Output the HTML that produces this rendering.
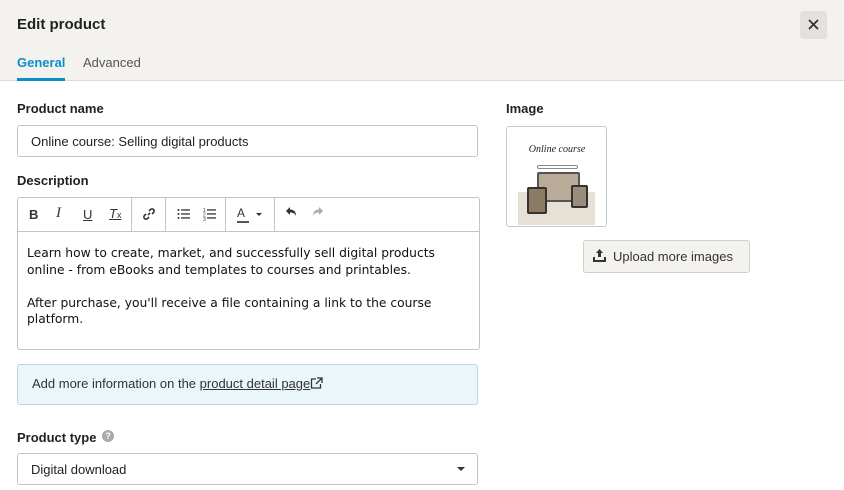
<!DOCTYPE html><html><head><style>
*{box-sizing:border-box;margin:0;padding:0}
body{width:844px;height:490px;overflow:hidden;background:#fff;font-family:"Liberation Sans",Arial,sans-serif;color:#222;position:relative}
.hdr{position:absolute;left:0;top:0;width:844px;height:81px;background:#f4f2ee;border-bottom:1px solid #dcdcdc}
.abs{position:absolute}
.lbl{position:absolute;font-size:13px;font-weight:bold;color:#222}
.inp{position:absolute;border:1px solid #c4c4c4;border-radius:3px;background:#fff;font-size:13px;padding-left:13px;display:flex;align-items:center;color:#222}
.tb{position:absolute;top:0;height:33px;border-right:1px solid #c4c4c4}
.ic{position:absolute;font-size:13px;color:#333}
.desc{font-family:"DejaVu Sans",Verdana,sans-serif;font-size:12.3px;line-height:16.5px;color:#111}
</style></head><body>
<div class="hdr"></div>
<div class="abs" style="left:17px;top:16px;font-size:15px;font-weight:bold;color:#222">Edit product</div>
<div class="abs" style="left:800px;top:11px;width:27px;height:28px;background:#e4e1dc;border-radius:3px"></div>
<svg class="abs" style="left:808px;top:19px" width="11" height="11" viewBox="0 0 11 11" stroke="#333" stroke-width="1.8"><path d="M1 1 10 10M10 1 1 10"/></svg>
<div class="abs" style="left:17px;top:55px;font-size:13px;font-weight:bold;color:#0a8fc7">General</div>
<div class="abs" style="left:17px;top:78px;width:48px;height:3px;background:#0a8fc7"></div>
<div class="abs" style="left:83px;top:55px;font-size:13px;color:#555">Advanced</div>

<div class="lbl" style="left:17px;top:101px">Product name</div>
<div class="inp" style="left:17px;top:125px;width:461px;height:32px">Online course: Selling digital products</div>
<div class="lbl" style="left:17px;top:173px">Description</div>
<div class="abs" style="left:17px;top:197px;width:463px;height:153px;border:1px solid #c4c4c4;border-radius:3px">
 <div class="abs" style="left:0;top:0;width:461px;height:34px;border-bottom:1px solid #c4c4c4"></div>
 <div class="tb" style="left:0;width:114px"></div>
 <div class="tb" style="left:114px;width:34px"></div>
 <div class="tb" style="left:148px;width:60px"></div>
 <div class="tb" style="left:208px;width:49px"></div>
 <div class="ic" style="left:11px;top:9px;font-weight:bold">B</div>
 <div class="ic" style="left:38px;top:7px;font-style:italic;font-family:'Liberation Serif',serif;font-size:15px">I</div>
 <div class="ic" style="left:65px;top:9px;text-decoration:underline">U</div>
 <div class="ic" style="left:91px;top:8px;font-style:italic;text-decoration:underline">T<span style="font-size:9px;font-style:normal">x</span></div>
 <svg class="abs" style="left:124px;top:9px" width="14" height="14" viewBox="0 0 14 14" fill="none" stroke="#333" stroke-width="1.6"><path d="M6 8 8 6M4 7 2.5 8.5a2 2 0 0 0 3 3L7 10M10 7l1.5-1.5a2 2 0 0 0-3-3L7 4"/></svg>
 <svg class="abs" style="left:159px;top:10px" width="14" height="12" viewBox="0 0 14 12" fill="#333"><circle cx="1.5" cy="2" r="1"/><circle cx="1.5" cy="6" r="1"/><circle cx="1.5" cy="10" r="1"/><rect x="4" y="1.3" width="9" height="1.3"/><rect x="4" y="5.3" width="9" height="1.3"/><rect x="4" y="9.3" width="9" height="1.3"/></svg>
 <svg class="abs" style="left:185px;top:9px" width="14" height="14" viewBox="0 0 14 14" fill="#333"><text x="0" y="5" font-size="5">1</text><text x="0" y="9.5" font-size="5">2</text><text x="0" y="14" font-size="5">3</text><rect x="4" y="2.3" width="9" height="1.3"/><rect x="4" y="6.3" width="9" height="1.3"/><rect x="4" y="10.3" width="9" height="1.3"/></svg>
 <div class="ic" style="left:219px;top:8px;font-size:12px">A</div>
 <div class="abs" style="left:219px;top:23px;width:12px;height:2px;background:#555"></div>
 <div class="abs" style="left:238px;top:15px;border:3px solid transparent;border-top:3px solid #333"></div>
 <svg class="abs" style="left:267px;top:9px" width="12" height="12" viewBox="0 0 12 12" fill="#333"><path d="M1 4 5 0v2.5c4 0 6 2.5 6 6.5-1-2.5-3-3.5-6-3.5V8z"/></svg>
 <svg class="abs" style="left:294px;top:9px" width="12" height="12" viewBox="0 0 12 12" fill="#aaa"><path d="M11 4 7 0v2.5C3 2.5 1 5 1 9c1-2.5 3-3.5 6-3.5V8z"/></svg>
 <div class="abs desc" style="left:9px;top:47px;width:432px">Learn how to create, market, and successfully sell digital products online - from eBooks and templates to courses and printables.<br><br>After purchase, you'll receive a file containing a link to the course platform.</div>
</div>
<div class="abs" style="left:17px;top:364px;width:461px;height:41px;background:#ebf6fb;border:1px solid #b9d7e2;border-radius:3px;font-size:13px;color:#333;padding:11px 0 0 14px">Add more information on the <span style="text-decoration:underline">product detail page</span><svg width="13" height="12" viewBox="0 0 13 12" fill="none" stroke="#333" stroke-width="1.3" style="vertical-align:-1px"><path d="M6 2H1.5v9h9V7M7 1h5v5M12 1 6 7"/></svg></div>
<div class="lbl" style="left:17px;top:430px">Product type</div>
<div class="abs" style="left:102px;top:430px;width:12px;height:12px;border-radius:50%;background:#aaa;color:#fff;font-size:9px;font-weight:bold;text-align:center;line-height:12px">?</div>
<div class="inp" style="left:17px;top:453px;width:461px;height:32px">Digital download</div>
<div class="abs" style="left:457px;top:467px;border:4px solid transparent;border-top:4px solid #333"></div>

<div class="lbl" style="left:506px;top:101px">Image</div>
<div class="abs" style="left:506px;top:126px;width:101px;height:101px;border:1px solid #c8c8c8;border-radius:3px;background:#fff;overflow:hidden">
 <div class="abs" style="left:11px;top:65px;width:77px;height:33px;background:#e6e0d5"></div>
 <div class="abs" style="left:0;top:17px;width:100px;text-align:center;font-family:'Liberation Serif',serif;font-style:italic;font-size:10px;color:#222">Online course</div>
 <div class="abs" style="left:30px;top:38px;width:41px;height:4px;border:1px solid #888;border-radius:2px"></div>
 <div class="abs" style="left:30px;top:45px;width:43px;height:30px;background:#b9ab98;border:2px solid #555;border-radius:2px"></div>
 <div class="abs" style="left:20px;top:60px;width:20px;height:27px;background:#8a7a66;border:2px solid #333;border-radius:2px"></div>
 <div class="abs" style="left:64px;top:58px;width:17px;height:23px;background:#9a8c7a;border:2px solid #333;border-radius:2px"></div>
</div>
<div class="abs" style="left:583px;top:240px;width:167px;height:33px;background:#f4f2ee;border:1px solid #cfcfcf;border-radius:3px;font-size:13px;color:#333;padding:8px 0 0 29px">Upload more images</div>
<svg class="abs" style="left:593px;top:249px" width="13" height="13" viewBox="0 0 13 13" fill="#333"><path d="M6.5 0 10 4H8v4H5V4H3zM0 8h2v3h9V8h2v5H0z"/></svg>
</body></html>
